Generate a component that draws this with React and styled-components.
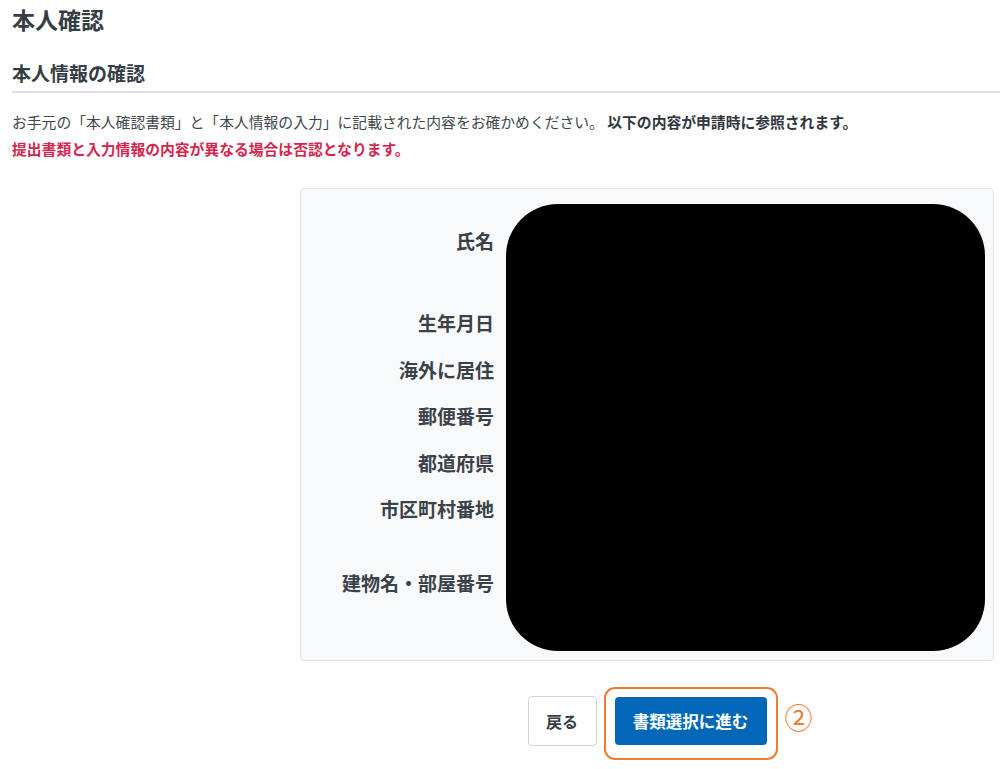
import styled, { createGlobalStyle } from "styled-components"

const GlobalStyle = createGlobalStyle`
    body {
        margin: 0;
        background: #ffffff;
        font-family: "Noto Sans CJK JP", "Noto Sans", sans-serif;
        color: #3a4048;
    }
`

const rows = [
    { label: "氏名", height: 82 },
    { label: "生年月日", height: 47 },
    { label: "海外に居住", height: 46 },
    { label: "郵便番号", height: 47 },
    { label: "都道府県", height: 46 },
    { label: "市区町村番地", height: 74 },
    { label: "建物名・部屋番号", height: 80 },
]

export default function App() {
    return (
        <>
            <GlobalStyle />
            <Page>
                <Title>本人確認</Title>
                <SectionHeading>本人情報の確認</SectionHeading>
                <Lead>
                    お手元の「本人確認書類」と「本人情報の入力」に記載された内容をお確かめください。
                    <strong> 以下の内容が申請時に参照されます。</strong>
                </Lead>
                <Warning>提出書類と入力情報の内容が異なる場合は否認となります。</Warning>

                <Card>
                    <Labels>
                        {rows.map((row) => (
                            <LabelRow key={row.label} $height={row.height}>
                                {row.label}
                            </LabelRow>
                        ))}
                    </Labels>
                    {/* 個人情報は塗りつぶし */}
                    <Redacted />
                </Card>

                <Actions>
                    <BackButton>戻る</BackButton>
                    <Highlight>
                        <PrimaryButton>書類選択に進む</PrimaryButton>
                        <Ring />
                        <StepMark>②</StepMark>
                    </Highlight>
                </Actions>
            </Page>
        </>
    )
}

const Page = styled.div`
    padding: 0 0 40px 12px;
    width: 988px;
`

const Title = styled.h1`
    margin: 0;
    padding-top: 4px;
    font-size: 23px;
    line-height: 30px;
    font-weight: 700;
    color: #363c44;
`

const SectionHeading = styled.h2`
    margin: 26px 0 0;
    padding-bottom: 5px;
    font-size: 19px;
    line-height: 26px;
    font-weight: 700;
    color: #363c44;
    border-bottom: 2px solid #dcdfe4;
`

const Lead = styled.p`
    margin: 15px 0 0;
    font-size: 14.8px;
    line-height: 27px;
    color: #40464e;

    strong {
        font-weight: 700;
        color: #30363e;
    }
`

const Warning = styled.p`
    margin: 0;
    font-size: 14.8px;
    line-height: 27px;
    font-weight: 700;
    color: #d3264f;
`

const Card = styled.div`
    margin: 26px 6px 0 288px;
    height: 447px;
    padding: 15px 8px 9px 0;
    display: flex;
    gap: 12px;
    background: #f8f9fb;
    border: 1px solid #e2e5e9;
    border-radius: 4px;
`

const Labels = styled.div`
    width: 193px;
    padding-top: 25px;
    display: flex;
    flex-direction: column;
    align-items: flex-end;
`

const LabelRow = styled.div`
    height: ${(p) => p.$height}px;
    font-size: 19px;
    line-height: 24px;
    font-weight: 700;
    color: #3b4149;
    white-space: nowrap;
`

const Redacted = styled.div`
    flex: 1;
    background: #000000;
    border-radius: 52px;
`

const Actions = styled.div`
    margin: 35px 6px 0 288px;
    display: flex;
    justify-content: center;
    align-items: center;
    gap: 18px;
`

const BackButton = styled.button`
    width: 69px;
    height: 50px;
    padding: 0;
    background: #ffffff;
    border: 1px solid #cfd4da;
    border-radius: 4px;
    font-family: inherit;
    font-size: 16px;
    font-weight: 700;
    color: #363c44;
`

const Highlight = styled.div`
    position: relative;
`

const PrimaryButton = styled.button`
    display: block;
    width: 152px;
    height: 48px;
    padding: 0;
    background: #0068b7;
    border: none;
    border-radius: 4px;
    font-family: inherit;
    font-size: 16.5px;
    font-weight: 700;
    color: #ffffff;
`

const Ring = styled.div`
    position: absolute;
    inset: -10px -11px -15px -11px;
    border: 2px solid #ee7d33;
    border-radius: 11px;
    pointer-events: none;
`

const StepMark = styled.span`
    position: absolute;
    left: 170px;
    top: 4px;
    font-size: 28px;
    line-height: 32px;
    color: #ee7d33;
`
